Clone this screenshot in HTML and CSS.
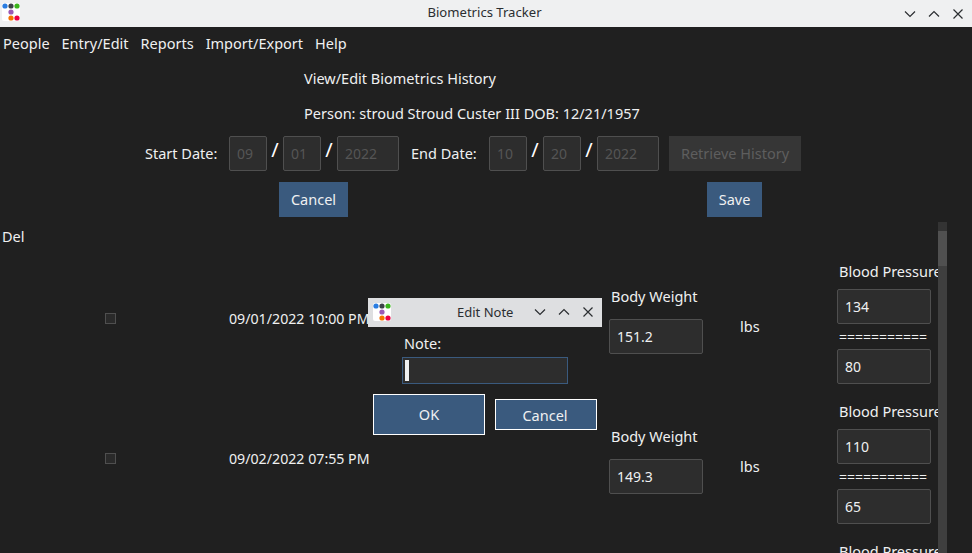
FILE: index.html
```html
<!DOCTYPE html>
<html lang="en">
<head>
  <meta charset="UTF-8">
  <title>Biometrics Tracker</title>
  <link rel="stylesheet" href="styles.css">
</head>
<body>

  <div class="titlebar">
    <svg class="logo" viewBox="0 0 20 20">
      <rect x="1" y="1" width="18" height="18" rx="2" fill="#fff"/>
      <circle cx="4" cy="4" r="2.6" fill="#2a7de1"/>
      <circle cx="10" cy="4" r="2.6" fill="#3d4248"/>
      <circle cx="16" cy="4" r="2.6" fill="#3bb51d"/>
      <circle cx="10" cy="10" r="2.6" fill="#9b59b6"/>
      <circle cx="10" cy="16" r="2.6" fill="#f67400"/>
      <circle cx="16" cy="16" r="2.6" fill="#ee0044"/>
    </svg>
    <span class="title-text">Biometrics Tracker</span>
    <div class="win-buttons">
      <svg viewBox="0 0 12 12"><path d="M1 3.5 6 8.5 11 3.5"/></svg>
      <svg viewBox="0 0 12 12"><path d="M1 8.5 6 3.5 11 8.5"/></svg>
      <svg viewBox="0 0 12 12"><path d="M1.5 1.5 10.500 10.500M10.500 1.500 1.500 10.500"/></svg>
    </div>
  </div>

  <div class="menubar">
    <span>People</span>
    <span>Entry/Edit</span>
    <span>Reports</span>
    <span>Import/Export</span>
    <span>Help</span>
  </div>

  <div class="heading">View/Edit Biometrics History</div>
  <div class="heading person">Person: stroud Stroud Custer III DOB: 12/21/1957</div>

  <div class="date-row">
    <span class="date-label">Start Date:</span>
    <span class="field off small">09</span><span class="slash">/</span>
    <span class="field off small">01</span><span class="slash">/</span>
    <span class="field off year">2022</span>
    <span class="date-label end">End Date:</span>
    <span class="field off small">10</span><span class="slash">/</span>
    <span class="field off small">20</span><span class="slash">/</span>
    <span class="field off year">2022</span>
    <span class="btn-retrieve">Retrieve History</span>
  </div>

  <div class="action-row">
    <span class="btn btn-cancel">Cancel</span>
    <span class="btn btn-save">Save</span>
  </div>

  <div class="history">
    <div class="del-head">Del</div>

    <div class="row">
      <span class="check"></span>
      <span class="stamp">09/01/2022 10:00 PM</span>
      <div class="weight">
        <div class="cell-label">Body Weight</div>
        <span class="field value">151.2</span>
      </div>
      <span class="unit">lbs</span>
      <div class="pressure">
        <div class="cell-label">Blood Pressure</div>
        <span class="field value">134</span>
        <div class="rule">===========</div>
        <span class="field value">80</span>
      </div>
    </div>

    <div class="row">
      <span class="check"></span>
      <span class="stamp">09/02/2022 07:55 PM</span>
      <div class="weight">
        <div class="cell-label">Body Weight</div>
        <span class="field value">149.3</span>
      </div>
      <span class="unit">lbs</span>
      <div class="pressure">
        <div class="cell-label">Blood Pressure</div>
        <span class="field value">110</span>
        <div class="rule">===========</div>
        <span class="field value">65</span>
      </div>
    </div>

    <div class="row">
      <span></span>
      <span></span>
      <span></span>
      <span></span>
      <div class="pressure">
        <div class="cell-label">Blood Pressure</div>
      </div>
    </div>

    <div class="scrollbar">
      <div class="scroll-up"></div>
      <div class="scroll-thumb"></div>
    </div>
  </div>

  <div class="dialog">
    <div class="dialog-title">
      <svg class="logo" viewBox="0 0 20 20">
        <rect x="1" y="1" width="18" height="18" rx="2" fill="#fff"/>
        <circle cx="4" cy="4" r="2.6" fill="#2a7de1"/>
        <circle cx="10" cy="4" r="2.6" fill="#3d4248"/>
        <circle cx="16" cy="4" r="2.6" fill="#3bb51d"/>
        <circle cx="10" cy="10" r="2.6" fill="#9b59b6"/>
        <circle cx="10" cy="16" r="2.6" fill="#f67400"/>
        <circle cx="16" cy="16" r="2.6" fill="#ee0044"/>
      </svg>
      <span class="dialog-text">Edit Note</span>
      <div class="win-buttons">
        <svg viewBox="0 0 12 12"><path d="M1 3.5 6 8.5 11 3.5"/></svg>
        <svg viewBox="0 0 12 12"><path d="M1 8.5 6 3.5 11 8.5"/></svg>
        <svg viewBox="0 0 12 12"><path d="M1.5 1.5 10.500 10.500M10.500 1.500 1.500 10.500"/></svg>
      </div>
    </div>
    <div class="note-label">Note:</div>
    <div class="note-input"><span class="caret"></span></div>
    <div class="dialog-buttons">
      <span class="btn btn-ok">OK</span>
      <span class="btn btn-note-cancel">Cancel</span>
    </div>
  </div>

</body>
</html>
```

FILE: styles.css
```css
html, body {
  height: 553px;
  overflow: hidden;
}
body {
  background-color: #202020;
  color: #eff0f1;
  font-family: "Noto Sans", sans-serif;
  font-size: 14.5px;
  line-height: 19px;
  margin: 0;
  position: relative;
}
.titlebar {
  height: 27px;
  background-color: #eff0f1;
  color: #2b2e31;
  display: flex;
  align-items: center;
  position: relative;
}
.logo {
  width: 20px;
  height: 20px;
  margin-left: 1px;
  margin-bottom: 3px;
  flex: none;
}
.title-text {
  position: absolute;
  left: 0;
  right: 3px;
  top: 2px;
  text-align: center;
  font-size: 13.1px;
  line-height: 20px;
}
.win-buttons {
  margin-left: auto;
  margin-right: 8px;
  display: flex;
  gap: 12px;
}
.win-buttons svg {
  width: 12px;
  height: 12px;
  fill: none;
  stroke: #2b2e31;
  stroke-width: 1.2;
}
.menubar {
  box-sizing: border-box;
  height: 34px;
  display: flex;
  align-items: center;
  gap: 12px;
  padding-left: 3px;
  padding-bottom: 2px;
}
.heading {
  padding-left: 304px;
  margin-top: 8px;
  height: 20px;
}
.person {
  margin-top: 15px;
}
.date-row {
  display: flex;
  align-items: center;
  height: 35px;
  margin-top: 12px;
  padding-left: 145px;
}
.date-label {
  width: 84px;
  white-space: nowrap;
}
.date-label.end {
  margin-left: 12px;
  width: 78px;
}
.field {
  display: flex;
  align-items: center;
  box-sizing: border-box;
  height: 35px;
  padding-left: 7px;
  font-size: 14px;
  line-height: 20px;
  background-color: #2d2d2d;
  border: 1px solid #4f4f4f;
  border-radius: 2px;
}
.off {
  color: #555;
}
.small {
  width: 38px;
}
.year {
  width: 62px;
}
.slash {
  width: 16px;
  text-align: center;
  font-size: 20px;
  line-height: 20px;
  color: #fff;
  margin-top: -8px;
}
.btn-retrieve {
  margin-left: 10px;
  width: 132px;
  height: 35px;
  display: flex;
  align-items: center;
  justify-content: center;
  background-color: #363636;
  color: #5e5e5e;
}
.action-row {
  display: flex;
  margin-top: 11px;
  padding-left: 279px;
}
.btn {
  display: flex;
  align-items: center;
  justify-content: center;
  box-sizing: border-box;
  background-color: #3a5a7e;
}
.btn-cancel {
  width: 69px;
  height: 35px;
}
.btn-save {
  width: 55px;
  height: 35px;
  margin-left: 359px;
}
.history {
  position: relative;
  margin-top: 5px;
  height: 331px;
  overflow: hidden;
}
.del-head {
  padding-left: 2px;
  margin-top: 5px;
  height: 20px;
}
.row {
  display: grid;
  grid-template-columns: 229px 380px 131px 97px 101px;
  height: 140px;
  margin-top: 15px;
  margin-bottom: -15px;
}
.check {
  width: 9px;
  height: 9px;
  margin-left: 105px;
  margin-top: 51px;
  border: 1px solid #4f4f4f;
  background-color: #2a2a2a;
}
.stamp {
  margin-top: 47px;
  font-size: 14.2px;
  line-height: 20px;
  white-space: nowrap;
}
.weight {
  margin-top: 25px;
}
.weight .cell-label {
  padding-left: 2px;
  height: 20px;
  margin-bottom: 12px;
}
.unit {
  margin-top: 55px;
}
.pressure {
  overflow: hidden;
}
.cell-label {
  white-space: nowrap;
}
.pressure .cell-label {
  padding-left: 2px;
  height: 20px;
  margin-bottom: 7px;
}
.value {
  width: 94px;
}
.rule {
  padding-left: 2px;
  height: 25px;
  font-size: 14px;
  line-height: 26px;
}
.scrollbar {
  position: absolute;
  left: 938px;
  top: 0;
  width: 9px;
  height: 331px;
  background-color: #3f3f3f;
}
.scroll-up {
  height: 9px;
  background-color: #333;
}
.scroll-thumb {
  height: 35px;
  background-color: #505050;
}
.dialog {
  position: absolute;
  left: 368px;
  top: 298px;
  width: 234px;
  height: 142px;
  background-color: #202020;
}
.dialog-title {
  height: 29px;
  padding-bottom: 1px;
  box-sizing: border-box;
  background-color: #dedfe1;
  color: #2b2e31;
  display: flex;
  align-items: center;
  font-size: 13px;
}
.dialog-title .logo {
  margin-left: 4px;
  margin-bottom: 0;
}
.dialog-text {
  margin-left: 65px;
}
.note-label {
  margin-top: 7px;
  height: 20px;
  padding-left: 36px;
}
.note-input {
  box-sizing: border-box;
  width: 166px;
  height: 27px;
  margin-top: 3px;
  margin-left: 34px;
  padding: 2px;
  background-color: #2d2d2d;
  border: 1px solid #3a5a7e;
}
.caret {
  display: block;
  width: 4px;
  height: 21px;
  background-color: #eff0f1;
}
.dialog-buttons {
  display: flex;
  align-items: center;
  margin-top: 10px;
  margin-left: 5px;
  gap: 10px;
}
.btn-ok {
  width: 112px;
  height: 41px;
  border: 1px solid #fff;
}
.btn-note-cancel {
  width: 102px;
  height: 31px;
  padding-top: 2px;
  padding-right: 2px;
  border: 1px solid #fff;
}
```
